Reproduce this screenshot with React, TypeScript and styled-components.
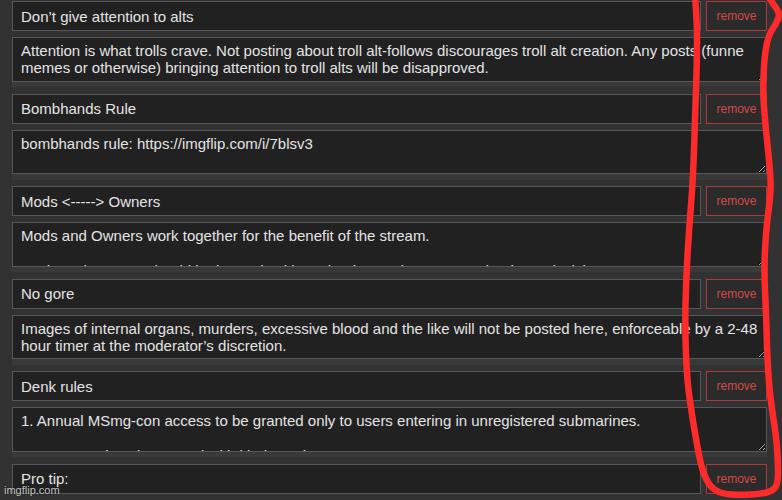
import React from "react";
import styled, { createGlobalStyle } from "styled-components";

const GlobalStyle = createGlobalStyle`
  html, body {
    margin: 0;
    padding: 0;
    background: #323232;
    overflow: hidden;
  }
  body {
    font-family: "Liberation Sans", Arial, sans-serif;
  }
  * { box-sizing: border-box; }
`;

const Page = styled.div`
  position: relative;
  width: 782px;
  height: 500px;
  overflow: hidden;
  background: #323232;
  padding: 1px 15px 0 12px;
`;

const List = styled.div`
  display: flex;
  flex-direction: column;
`;

const Item = styled.div`
  display: flex;
  flex-direction: column;
  gap: 6px;
  margin-bottom: 6.5px;
`;

const TitleRow = styled.div`
  display: grid;
  grid-template-columns: 1fr 61px;
  gap: 5px;
  height: 30px;
`;

const TitleInput = styled.input`
  height: 30px;
  margin: 0;
  padding: 0 8px;
  background: #212121;
  border: 1px solid #585858;
  border-radius: 0;
  color: #e4e4e4;
  font-family: "Liberation Sans", Arial, sans-serif;
  font-size: 15px;
  outline: none;
`;

const RemoveButton = styled.button`
  height: 30px;
  margin: 0;
  padding: 0;
  background: #2b2b2b;
  border: 1px solid #a83a3a;
  border-radius: 0;
  color: #d24a48;
  font-family: "Liberation Sans", Arial, sans-serif;
  font-size: 12px;
  cursor: pointer;
`;

const BodyWell = styled.div`
  display: flex;
  padding-bottom: 5.5px;
  background: #393939;
`;

const BodyArea = styled.textarea`
  display: block;
  width: 100%;
  height: 44.5px;
  margin: 0;
  padding: 4px 8px;
  background: #212121;
  border: 1px solid #585858;
  border-radius: 0;
  color: #e4e4e4;
  font-family: "Liberation Sans", Arial, sans-serif;
  font-size: 15px;
  line-height: 17.25px;
  overflow: hidden;
  resize: vertical;
  color-scheme: dark;
  outline: none;
`;

const Annotation = styled.svg`
  position: absolute;
  left: 0;
  top: 0;
  width: 782px;
  height: 500px;
  pointer-events: none;
`;

const Watermark = styled.div`
  position: absolute;
  left: 4px;
  top: 484px;
  font-family: "Liberation Sans", Arial, sans-serif;
  font-size: 11px;
  color: rgba(225, 225, 225, 0.85);
  text-shadow: 0 0 2px rgba(0, 0, 0, 0.6);
  pointer-events: none;
`;

type Rule = { title: string; body: string };

const rules: Rule[] = [
  {
    title: "Don’t give attention to alts",
    body:
      "Attention is what trolls crave. Not posting about troll alt-follows discourages troll alt creation. Any posts (funne memes or otherwise) bringing attention to troll alts will be disapproved.",
  },
  {
    title: "Bombhands Rule",
    body: "bombhands rule: https://imgflip.com/i/7blsv3",
  },
  {
    title: "Mods <-----> Owners",
    body:
      "Mods and Owners work together for the benefit of the stream.\n\nMods and Owners should be in touch with each other and respect each other’s decisions.",
  },
  {
    title: "No gore",
    body:
      "Images of internal organs, murders, excessive blood and the like will not be posted here, enforceable by a 2-48 hour timer at the moderator’s discretion.",
  },
  {
    title: "Denk rules",
    body:
      "1. Annual MSmg-con access to be granted only to users entering in unregistered submarines.\n\n2. Everyone is to be treated with kindness in MSmg.",
  },
  {
    title: "Pro tip:",
    body: "",
  },
];

const loop: [number, number][] = [
  [695, -4], [697, 20], [697, 60], [695, 120], [693, 180], [689, 230],
  [686, 280], [685, 330], [687, 380], [692, 415], [697, 445], [702, 470],
  [710, 487], [722, 494], [742, 495], [760, 494], [773, 491], [778, 483],
  [778, 460], [776, 435], [772, 410], [769, 385], [767, 350], [766, 310],
  [764, 270], [766, 230], [770, 200], [771, 180], [768, 150], [765, 120],
  [763, 95], [764, 60], [768, 36], [776, 24], [780, 14], [774, 5], [768, -4],
];

function smoothPath(pts: [number, number][]): string {
  let d = `M${pts[0][0]},${pts[0][1]}`;
  for (let i = 1; i < pts.length - 1; i++) {
    const [x, y] = pts[i];
    const [nx, ny] = pts[i + 1];
    d += ` Q${x},${y} ${(x + nx) / 2},${(y + ny) / 2}`;
  }
  const last = pts[pts.length - 1];
  d += ` L${last[0]},${last[1]}`;
  return d;
}

export default function App() {
  return (
    <>
      <GlobalStyle />
      <Page>
        <List>
          {rules.map((r, i) => (
            <Item key={i}>
              <TitleRow>
                <TitleInput defaultValue={r.title} />
                <RemoveButton>remove</RemoveButton>
              </TitleRow>
              <BodyWell>
                <BodyArea defaultValue={r.body} rows={2} />
              </BodyWell>
            </Item>
          ))}
        </List>
        <Annotation viewBox="0 0 782 500">
          <path
            d={smoothPath(loop)}
            fill="none"
            stroke="#ff2b2b"
            strokeWidth={6.5}
            strokeLinecap="round"
            strokeLinejoin="round"
          />
        </Annotation>
        <Watermark>imgflip.com</Watermark>
      </Page>
    </>
  );
}
